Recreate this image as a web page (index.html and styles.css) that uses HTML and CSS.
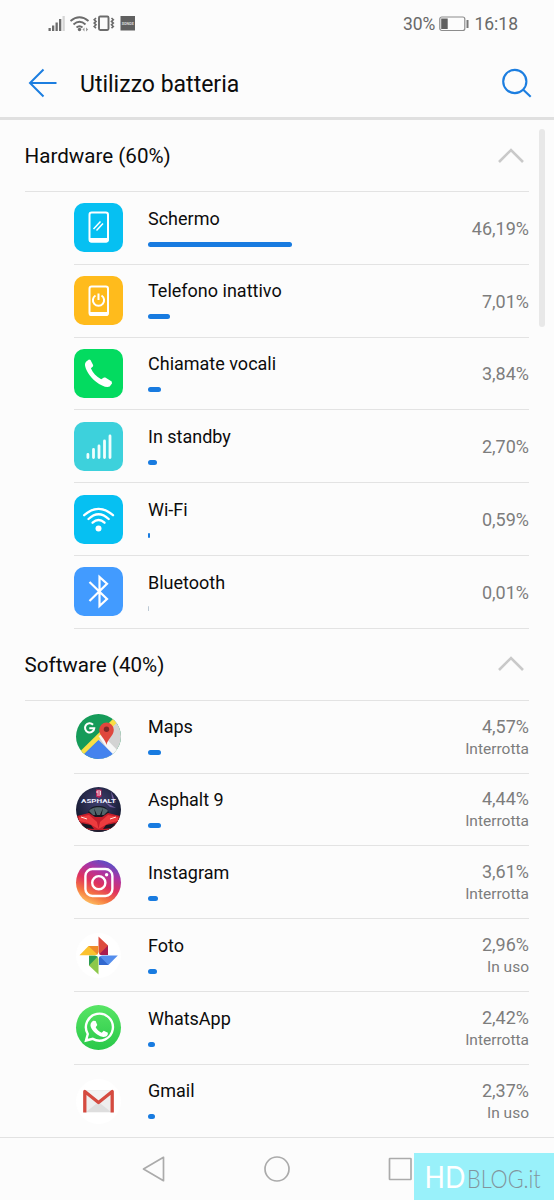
FILE: index.html
```html
<!DOCTYPE html>
<html lang="it">
<head>
<meta charset="utf-8">
<title>Utilizzo batteria</title>
<link rel="stylesheet" href="styles.css">
</head>
<body>
<div class="screen">
  <div class="status">
    <svg class="status-left" width="90" height="20" viewBox="0 0 90 20">
      <g fill="#6c6c6c"><rect x=".5" y="14" width="2.300" height="3"/><rect x="4" y="11.500" width="2.300" height="5.500"/><rect x="7.500" y="8.500" width="2.300" height="8.500"/><rect x="11" y="5" width="2.300" height="12"/></g>
      <rect x="14.500" y="2" width="2.300" height="15" fill="#d5d5d5"/>
      <g fill="none" stroke="#6c6c6c" stroke-width="1.900"><path d="M22.500 7Q31.500-.5 40.500 7M25.500 10.500Q31.500 5 37.500 10.500M28.500 13.500Q31.500 10.800 34.500 13.500"/>
      <rect x="51" y="2.500" width="9.500" height="13.500" rx="1.200"/>
      <path stroke-width="1.600" d="M48 4l-1.800 1.700 1.800 1.700-1.800 1.700 1.800 1.700-1.800 1.700 1.800 1.700M63.500 4l1.800 1.700-1.800 1.700 1.800 1.700-1.800 1.700 1.800 1.700-1.800 1.700"/></g>
      <circle cx="31.500" cy="15.500" r="1.700" fill="#6c6c6c"/><path d="M36.500 13.500v4l-2-2zM38 13.500v4l2.200-2z" fill="#999"/>
      <rect x="72.500" y="2" width="14.500" height="14.500" fill="#606060"/>
      <text x="73.700" y="10.900" font-size="3.800" font-weight="bold" textLength="12" lengthAdjust="spacingAndGlyphs" fill="#ddd">SONOS</text>
    </svg>
    <div class="status-right">
      <span class="charge">30%</span>
      <svg width="30" height="16" viewBox="0 0 30 16"><rect x=".8" y="1" width="25" height="13.500" rx="2" fill="none" stroke="#8c8c8c" stroke-width="1.200"/><rect x="2.200" y="2.500" width="6.500" height="10.500" fill="#606060"/><rect x="27.500" y="4" width="2" height="8" fill="#777"/></svg>
      <span class="clock">16:18</span>
    </div>
  </div>
  <header class="header">
    <svg class="back" width="30" height="30" viewBox="0 0 30 30"><path d="M15.500 1.500L2 15l13.500 13.500M2 15H28.500" fill="none" stroke="#1c7ee0" stroke-width="2"/></svg>
    <h1>Utilizzo batteria</h1>
    <svg class="search" width="32" height="32" viewBox="0 0 32 32"><g fill="none" stroke="#1c7ee0" stroke-width="2.100"><circle cx="14.800" cy="14.500" r="11.600"/><path d="M23 22.600l7.700 7.200"/></g></svg>
  </header>
  <main class="list">
    <div class="scrollbar"></div>
    <div class="section"><h2>Hardware (60%)</h2><svg width="28" height="16" viewBox="0 0 28 16"><path d="M2 14L14 2l12 12" fill="none" stroke="#c9c9c9" stroke-width="2.600"/></svg></div>

    <div class="row">
      <svg class="icon" viewBox="0 0 49 49"><rect width="49" height="49" rx="10" fill="#06c0f2"/><rect x="15.500" y="9.500" width="18.500" height="29" rx="2.200" fill="none" stroke="#fff" stroke-width="2"/><path d="M15 35h19.500v2.500a2 2 0 01-2 2H17a2 2 0 01-2-2z" fill="#fff"/><path d="M19.500 26l7-7.500M22.500 27.500l6.500-7" stroke="#fff" stroke-width="1.500"/></svg>
      <div class="info"><span class="name">Schermo</span><span class="bar" style="width:144px"></span></div><div class="value">46,19%</div>
    </div>
    <div class="row">
      <svg class="icon" viewBox="0 0 49 49"><rect width="49" height="49" rx="10" fill="#ffbb1c"/><rect x="15.500" y="10.500" width="18.500" height="28.500" rx="2.200" fill="none" stroke="#fff" stroke-width="2"/><path d="M15 36h19.500v2a2 2 0 01-2 2H17a2 2 0 01-2-2z" fill="#fff"/><path d="M21.500 19.500a5.600 5.600 0 106 0M24.500 17.500v6.500" fill="none" stroke="#fff" stroke-width="2"/></svg>
      <div class="info"><span class="name">Telefono inattivo</span><span class="bar" style="width:22px"></span></div><div class="value">7,01%</div>
    </div>
    <div class="row">
      <svg class="icon" viewBox="0 0 49 49"><rect width="49" height="49" rx="10" fill="#03db60"/><path d="M12.300 12.500l2.700-2 1.500.4 2.700 5.300-.3 1.300-2 1.800c1.800 4.700 5.400 8.200 10.300 10.900l2.800-1.800 1.300.1 6.400 4.100.3 1.800-2.300 3.200c-3.100 1.500-8.500-.8-13.700-4.800C15.300 27.500 11.400 20 11 16.200c-.1-1.800.5-2.900 1.300-3.700z" fill="#fff"/></svg>
      <div class="info"><span class="name">Chiamate vocali</span><span class="bar" style="width:12.500px"></span></div><div class="value">3,84%</div>
    </div>
    <div class="row">
      <svg class="icon" viewBox="0 0 49 49"><rect width="49" height="49" rx="10" fill="#3dd1dc"/><path d="M13.900 35.500v-3M19.500 35.500v-8M25 35.500V24M30.500 35.500V19M36 35.500V14" stroke="#effefd" stroke-width="2.800" stroke-linecap="round"/></svg>
      <div class="info"><span class="name">In standby</span><span class="bar" style="width:8.500px"></span></div><div class="value">2,70%</div>
    </div>
    <div class="row">
      <svg class="icon" viewBox="0 0 49 49"><rect width="49" height="49" rx="10" fill="#06c0f2"/><g fill="none" stroke="#fff" stroke-width="2.300" stroke-linecap="round"><path d="M10.200 20.200Q24.500 7.500 39 20.200M14.500 24Q24.500 14.500 34.700 24M18.600 27.700Q24.500 22.300 30.500 27.700"/></g><circle cx="24.500" cy="33.500" r="3" fill="#fff"/></svg>
      <div class="info"><span class="name">Wi-Fi</span><span class="bar" style="width:2px"></span></div><div class="value">0,59%</div>
    </div>
    <div class="row">
      <svg class="icon" viewBox="0 0 49 49"><rect width="49" height="49" rx="10" fill="#429bff"/><path d="M15.500 15L33 32l-7.500 7V10l7.500 6.700L15.500 34" fill="none" stroke="#fff" stroke-width="2.200"/></svg>
      <div class="info"><span class="name">Bluetooth</span><span class="bar faint" style="width:1px"></span></div><div class="value">0,01%</div>
    </div>

    <div class="section"><h2>Software (40%)</h2><svg width="28" height="16" viewBox="0 0 28 16"><path d="M2 14L14 2l12 12" fill="none" stroke="#c9c9c9" stroke-width="2.600"/></svg></div>

    <div class="row">
      <svg class="icon" viewBox="0 0 49 49"><defs><clipPath id="disc"><circle cx="24.500" cy="24.500" r="22.500"/></clipPath></defs>
        <g clip-path="url(#disc)"><rect width="49" height="49" fill="#159b59"/><path d="M24 24L41 5l8 3v41H24z" fill="#d3d3d3"/><path d="M6 39.500L39 7l4 3.500L9.500 43z" fill="#f9df45"/><path d="M24.500 24l3.500-1.500L49 44l-10 1z" fill="#f7f7f7"/><path d="M24.500 28L5 47v2h36l3-2z" fill="#4483ee"/></g>
        <path d="M32.500 33c-.7-5.500-7.300-9-7.300-15.200a7.300 7.300 0 0114.600 0C39.800 24 33.200 27.500 32.500 33z" fill="#df473d"/><circle cx="32.500" cy="17.300" r="2.700" fill="#7d2827"/>
        <path d="M19 12.700a4.600 4.600 0 101.200 3.600H15.300" fill="none" stroke="#fff" stroke-width="2.100"/></svg>
      <div class="info"><span class="name">Maps</span><span class="bar" style="width:12.500px"></span></div><div class="value">4,57%<small>Interrotta</small></div>
    </div>
    <div class="row">
      <svg class="icon" viewBox="0 0 49 49"><defs><radialGradient id="night" cy=".35"><stop stop-color="#414070"/><stop offset="1" stop-color="#171c34"/></radialGradient></defs>
        <g clip-path="url(#disc)"><rect width="49" height="49" fill="url(#night)"/><path d="M0 34h49v15H0z" fill="#251d30"/><path d="M37 6l5 12-4-5zM31 17l11 6-6-1z" fill="#7560a0"/><path d="M14 28c2-6 5-7 10.500-7S33 22 35 28l-4 4H18z" fill="#171923"/><path d="M15 26c3-5 16-5 19 0l-4 4H19z" fill="#52656b"/><path d="M20 23l3 7h3l3-7-2 10h-5z" fill="#161821"/><path d="M3 31l12-3 6 4h7l6-4 12 3-2 9-9 5H14l-9-5z" fill="#c51e2b"/><path d="M5 32l10-2 8 7 1.500 7L14 38 5 36zM44 32l-10-2-8 7-1.500 7L35 38l9-2z" fill="#ed3b3e"/><path d="M7 38l10 2 3 4-9-1zM42 38l-10 2-3 4 9-1z" fill="#171723"/><path d="M7 32l6 2M42 32l-6 2" stroke="#ffe8df"/></g>
        <path d="M22 4.500h5.500v7l-2.800 1.500L22 11.500z" fill="#bd2459"/><path d="M23 6h3.500v2H23zm3.500 2v2H23" fill="none" stroke="#fff" stroke-width=".8"/>
        <text x="7" y="18.300" font-size="5.300" font-weight="bold" textLength="35" lengthAdjust="spacingAndGlyphs" fill="#eef0ff">ASPHALT</text></svg>
      <div class="info"><span class="name">Asphalt 9</span><span class="bar" style="width:12.500px"></span></div><div class="value">4,44%<small>Interrotta</small></div>
    </div>
    <div class="row">
      <svg class="icon" viewBox="0 0 49 49"><defs><linearGradient id="ig" x1=".2" y1="1" x2=".65" y2="0"><stop stop-color="#ffd36a"/><stop offset=".25" stop-color="#f67940"/><stop offset=".5" stop-color="#df315f"/><stop offset=".75" stop-color="#ae34a2"/><stop offset="1" stop-color="#5750c7"/></linearGradient></defs><circle cx="24.500" cy="24.500" r="22.500" fill="url(#ig)"/><g fill="none" stroke="#fff" stroke-width="2.400"><rect x="11.400" y="11" width="27" height="27" rx="7"/><circle cx="24.800" cy="24.700" r="6.600"/></g><circle cx="32.600" cy="16.800" r="1.700" fill="#fff"/></svg>
      <div class="info"><span class="name">Instagram</span><span class="bar" style="width:10px"></span></div><div class="value">3,61%<small>Interrotta</small></div>
    </div>
    <div class="row">
      <svg class="icon" viewBox="0 0 49 49"><circle cx="24.500" cy="24.500" r="22.500" fill="#fff"/><path d="M24.500 5.500l9.500 9v9.500h-9.500z" fill="#dd4b3e"/><path d="M24.500 24L34 14.500V24z" fill="#a91e50"/><path d="M5.500 24.200l9-9.300h9.700v9.300z" fill="#fbc22f"/><path d="M14.500 14.900h9.700v9.300z" fill="#ef8b2c"/><path d="M24.500 43.500l-9.500-9v-9.800h9.500z" fill="#8dc84b"/><path d="M15 34.500v-9.800h9.500z" fill="#2d9b54"/><path d="M25 24.500h18.800L34.400 34H25z" fill="#558eed"/><path d="M25 24.500l9.400 9.500H25z" fill="#3268cf"/><path d="M24.500 21l1 2.500 2.500 1-2.500 1-1 2.500-1-2.500-2.500-1 2.500-1z" fill="#fff"/></svg>
      <div class="info"><span class="name">Foto</span><span class="bar" style="width:8.500px"></span></div><div class="value">2,96%<small>In uso</small></div>
    </div>
    <div class="row">
      <svg class="icon" viewBox="0 0 49 49"><defs><linearGradient id="wa" x2="0" y2="1"><stop stop-color="#58e565"/><stop offset="1" stop-color="#29c849"/></linearGradient></defs><circle cx="24.500" cy="24.500" r="22.500" fill="url(#wa)"/><path d="M12 37.500l1.800-6.500a13.500 13.500 0 115 4.900z" fill="none" stroke="#fff" stroke-width="2.400"/><path d="M19.200 17.700l2.400.2 1.700 4-1.600 2.300c1.300 2.600 3.300 4.300 6 5.500l2-2 4.200 2-.2 2c-1 1.900-3.300 2.600-5.400 2-5.300-1.400-9.600-5.200-11.500-9.800-.9-2.400 0-5 2.400-6.200z" fill="#fff"/></svg>
      <div class="info"><span class="name">WhatsApp</span><span class="bar" style="width:7px"></span></div><div class="value">2,42%<small>Interrotta</small></div>
    </div>
    <div class="row last">
      <svg class="icon" viewBox="0 0 49 49"><circle cx="24.500" cy="24.500" r="22.500" fill="#fff"/><rect x="9.500" y="13" width="30" height="22.500" rx="1.500" fill="#eee"/><path d="M12 35l12.500-10L37 35z" fill="#dedede"/><path d="M12 14h25L24.500 24z" fill="#f3f3f3"/><path d="M10.800 35.500V14.500l13.700 11 13.700-11v21" fill="none" stroke="#d54b40" stroke-width="3.300" stroke-linejoin="round"/></svg>
      <div class="info"><span class="name">Gmail</span><span class="bar" style="width:6.500px"></span></div><div class="value">2,37%<small>In uso</small></div>
    </div>
  </main>
  <nav class="nav">
    <svg width="554" height="62" viewBox="0 0 554 62"><g fill="none" stroke="#ababab" stroke-width="1.700" stroke-linejoin="round"><path d="M143.500 31l20-11.700v23.400z"/><circle cx="277" cy="31" r="12"/><rect x="389.500" y="20.500" width="21.500" height="21" rx=".5"/></g></svg>
    <div class="watermark"><svg width="140" height="47" viewBox="0 0 140 47"><text class="hd" transform="translate(10.500 35) scale(.85 1)">HD</text><text class="blog" transform="translate(53 35) scale(.83 1)">BLOG.it</text></svg></div>
  </nav>
</div>
</body>
</html>
```
FILE: styles.css
```css
* { box-sizing: border-box; }
body { margin: 0; background: #fcfcfc; font-family: Roboto, "Liberation Sans", sans-serif; color: #0c0c0c; }
svg { display: block; flex: none; }
.screen { width: 554px; height: 1200px; display: flex; flex-direction: column; overflow: hidden; }
.status { height: 48px; flex: none; display: flex; justify-content: space-between; align-items: center; padding: 0 36px 0 48px; color: #696969; }
.status-left { margin-top: -1px; }
.status-right { display: flex; align-items: center; font-size: 17.5px; margin-top: -1px; }
.charge { margin-right: 4px; }
.clock { margin-left: 5px; }
.header { height: 72px; flex: none; display: flex; align-items: center; padding: 0 22px 0 28px; border-bottom: 3px solid #e0e0e0; }
h1 { margin: 0; font-size: 23px; font-weight: 400; flex: 1; padding: 3px 0 0 22px; }
.list { position: relative; flex: none; height: 1018px; padding-right: 25px; }
.scrollbar { position: absolute; right: 9px; top: 9px; width: 6px; height: 198px; border-radius: 3px; background: #e8e8e8; }
.section { height: 72px; margin-left: 24.5px; padding-right: 4px; border-bottom: 1px solid #e3e3e3; display: flex; align-items: center; justify-content: space-between; }
h2 { margin: 1px 0 0; font-size: 20.6px; font-weight: 400; }
.row { height: 72.8px; margin-left: 74px; border-bottom: 1px solid #e3e3e3; display: flex; align-items: center; }
.icon { width: 49px; height: 49px; margin-right: 25px; }
.info { flex: 1; height: 100%; display: flex; flex-direction: column; padding-top: 15.6px; }
.name { font-size: 18px; line-height: 22px; }
.bar { height: 5px; margin-top: 12px; border-radius: 2.5px; background: #187be0; }
.faint { background: #bcc9d4; }
.value { text-align: right; font-size: 18px; line-height: 22px; color: #7d7d7d; padding-top: 2px; }
.value small { display: block; font-size: 15.5px; }
.last { border-bottom: 0; }
.nav { position: relative; height: 63px; flex: none; margin-top: -1px; border-top: 1px solid #e2e2e2; background: #fcfcfc; }
.watermark { position: absolute; right: 0; bottom: 0; width: 140px; height: 47px; background: #99f1fa; }
.hd { font: 400 31.5px Lato, sans-serif; fill: #fff; }
.blog { font: 300 26px Lato, sans-serif; fill: #82959d; }
```
